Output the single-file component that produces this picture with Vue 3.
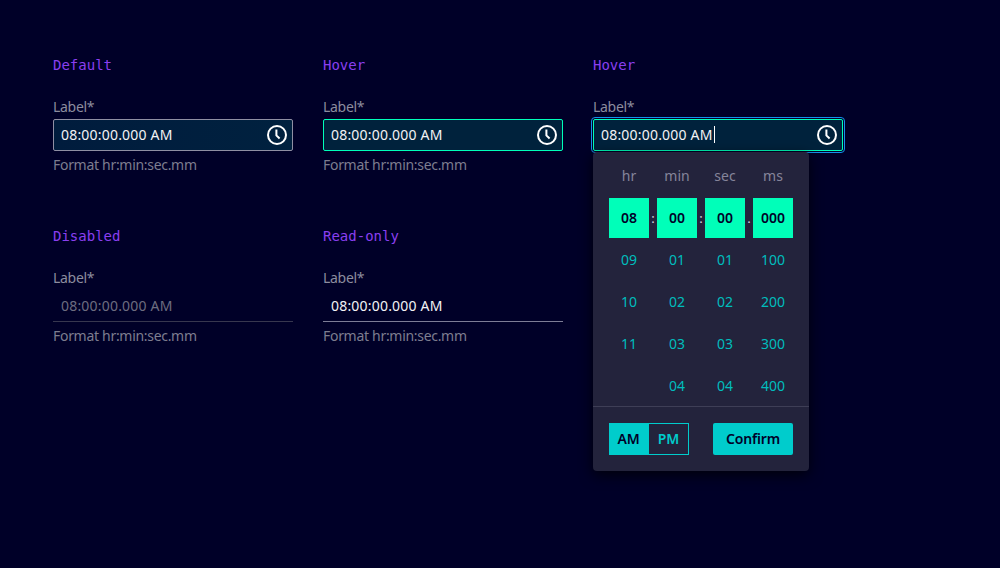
<script setup>
const time = '08:00:00.000 AM'
const help = 'Format hr:min:sec.mm'
const fields = [
  { title: 'Default', kind: 'default', icon: true },
  { title: 'Hover', kind: 'hover', icon: true },
  { title: 'Hover', kind: 'focus', icon: true, open: true },
  { title: 'Disabled', kind: 'disabled' },
  { title: 'Read-only', kind: 'readonly' },
]
const heads = ['hr', 'min', 'sec', 'ms']
const selected = [
  { v: '08', sep: ':' },
  { v: '00', sep: ':' },
  { v: '00', sep: '.' },
  { v: '000', sep: '' },
]
const rows = [
  ['09', '01', '01', '100'],
  ['10', '02', '02', '200'],
  ['11', '03', '03', '300'],
  ['', '04', '04', '400'],
]
</script>

<template>
  <main class="page">
    <section v-for="(f, i) in fields" :key="i" class="cell">
      <h3 class="title">{{ f.title }}</h3>
      <label class="label">Label*</label>
      <div class="box" :class="f.kind">
        <span class="value">{{ time }}<i v-if="f.open" class="caret"></i></span>
        <svg v-if="f.icon" class="clock" width="24" height="24" viewBox="0 0 24 24" fill="none">
          <circle cx="12" cy="12" r="9" stroke="#fff" stroke-width="2" />
          <path d="M11.4 6.6v5.8l3.2 3" stroke="#fff" stroke-width="2" />
        </svg>
      </div>
      <p v-if="!f.open" class="help">{{ help }}</p>

      <div v-if="f.open" class="popover">
        <div class="grid heads">
          <span v-for="h in heads" :key="h">{{ h }}</span>
        </div>
        <div class="grid selected">
          <span v-for="s in selected" :key="s.v + s.sep" class="sel" :data-sep="s.sep">{{ s.v }}</span>
        </div>
        <div v-for="(r, ri) in rows" :key="ri" class="grid opts">
          <span v-for="(o, oi) in r" :key="oi">{{ o }}</span>
        </div>
        <div class="foot">
          <div class="toggle">
            <span class="am">AM</span>
            <span class="pm">PM</span>
          </div>
          <button class="confirm">Confirm</button>
        </div>
      </div>
    </section>
  </main>
</template>

<style>
html, body { margin: 0; background: #000028; }
</style>

<style scoped>
.page {
  width: 1000px;
  height: 568px;
  box-sizing: border-box;
  padding: 56px 0 0 53px;
  display: grid;
  grid-template-columns: repeat(3, 270px);
  grid-auto-rows: 171px;
  align-content: start;
  background: #000028;
  font-family: "Noto Sans", sans-serif;
  overflow: hidden;
}
.cell { position: relative; width: 240px; }
.cell:nth-child(3) { width: 250px; }
.title {
  margin: 0 0 24px;
  font: 400 14px/18px "DejaVu Sans Mono", monospace;
  color: #8a3ff0;
}
.label {
  display: block;
  height: 18px;
  margin-bottom: 3px;
  font-size: 14px;
  line-height: 18px;
  letter-spacing: -0.3px;
  color: #8c8c9e;
}
.box {
  box-sizing: border-box;
  height: 32px;
  padding: 0 3px 0 7px;
  display: flex;
  align-items: center;
  justify-content: space-between;
  border: 1px solid transparent;
  border-radius: 2px;
  color: #f2f2f5;
  font-size: 14px;
}
.value { display: flex; align-items: center; letter-spacing: 0.2px; }
.default .value, .hover .value, .focus .value { padding-bottom: 2px; }
.default { background: linear-gradient(90deg, #001c3d, #00213f); border-color: #8f8fa3; }
.hover { background: #00223c; border-color: #00ffb9; }
.focus {
  background: #00223c;
  border-color: #00ffb9;
  outline: 1px solid #1491eb;
  outline-offset: 1px;
}
.disabled, .readonly {
  border-width: 0 0 1px;
  border-radius: 0;
  padding-left: 8px;
}
.disabled { color: #6d6d80; border-color: #37374f; }
.readonly { color: #f2f2f5; border-color: #7d7d96; }
.caret { width: 1px; height: 17px; background: #fff; margin-left: 1px; }
.help {
  margin: 5px 0 0;
  font-size: 14px;
  line-height: 18px;
  letter-spacing: -0.3px;
  color: #7d7d8f;
}
.popover {
  position: absolute;
  left: 0;
  top: 96px;
  width: 216px;
  height: 319px;
  box-sizing: border-box;
  padding-top: 12px;
  background: #23233c;
  border-radius: 4px;
  box-shadow: 0 4px 14px rgba(0, 0, 0, 0.75);
  z-index: 2;
}
.grid {
  display: grid;
  grid-template-columns: repeat(4, 40px);
  column-gap: 8px;
  padding: 0 16px;
  text-align: center;
  font-size: 14px;
}
.heads { height: 24px; line-height: 24px; color: #85859a; margin-bottom: 10px; }
.selected { height: 40px; margin-bottom: 1px; }
.sel {
  position: relative;
  background: #00ffb9;
  color: #000028;
  font-weight: 600;
  line-height: 40px;
}
.sel:not([data-sep=""])::after {
  content: attr(data-sep);
  position: absolute;
  left: 40px;
  width: 8px;
  text-align: center;
  color: #d5d5dc;
  font-weight: 400;
  font-size: 13px;
}
.opts { height: 42px; line-height: 42px; color: #00bdbd; }
.foot {
  margin-top: -1px;
  border-top: 1px solid #3e3e56;
  padding: 16px 16px 0;
  display: flex;
  justify-content: space-between;
}
.toggle { display: flex; width: 80px; height: 32px; font-size: 14px; font-weight: 600; }
.am, .pm {
  flex: 1;
  box-sizing: border-box;
  display: flex;
  align-items: center;
  justify-content: center;
  padding-bottom: 2px;
  letter-spacing: -0.1px;
}
.am { background: #00cccc; color: #000028; }
.pm { border: 1px solid #00cccc; color: #00cccc; }
.confirm {
  width: 80px;
  height: 32px;
  padding: 0 0 2px;
  border: 0;
  border-radius: 2px;
  background: #00cccc;
  color: #000028;
  font: 600 14px "Noto Sans", sans-serif;
  letter-spacing: -0.2px;
}
</style>
